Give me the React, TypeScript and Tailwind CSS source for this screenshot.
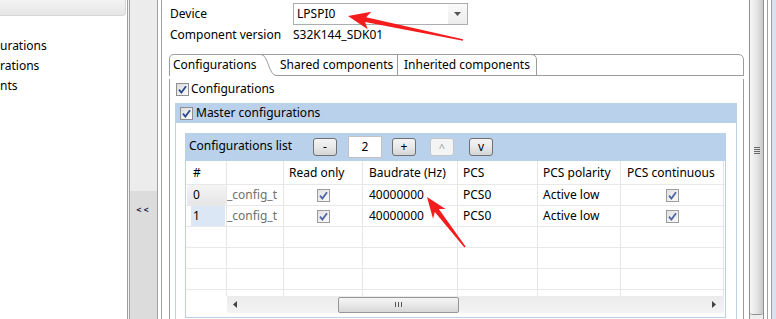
import React from "react";

const Check = ({ table = false }: { table?: boolean }) => (
  <span
    className={
      table
        ? "inline-flex h-[13px] w-[13px] items-center justify-center border border-[#9c9c9c] bg-gradient-to-br from-[#e2e2e2] to-[#fafafa]"
        : "inline-flex h-[13px] w-[13px] items-center justify-center border border-[#8e8f8f] bg-gradient-to-br from-[#dcdcdc] to-[#fbfbfb]"
    }
  >
    <svg width="11" height="11" viewBox="0 0 11 11">
      <path d="M2 5.6 L4.4 8.6 L9 2.2" fill="none" stroke={table ? "#5066a4" : "#2b4a8c"} strokeWidth="1.8" />
    </svg>
  </span>
);

const Btn = ({ label, disabled = false }: { label: string; disabled?: boolean }) => (
  <div
    className={
      disabled
        ? "flex h-[18px] w-[24px] shrink-0 items-center justify-center rounded-[3px] border border-[#c3c6c9] bg-[#f4f4f4] text-[11px] leading-none text-[#a0a0a0]"
        : "flex h-[18px] w-[24px] shrink-0 items-center justify-center rounded-[3px] border border-[#707070] bg-gradient-to-b from-[#f4f4f4] via-[#e9e9e9] to-[#d4d4d4] text-[12px] leading-none text-black"
    }
  >
    {label}
  </div>
);

const cell = "flex items-center border-r border-[#e6e6e6] overflow-hidden whitespace-nowrap";

const DataRow = ({ idx }: { idx: number }) => (
  <div className="grid h-[21px] grid-cols-[41px_57px_79px_95px_80px_83px_103px] border-b border-[#e8e8e8]">
    <div className="flex border-r border-[#e6e6e6]">
      {idx === 0 && (
        <div className="ml-[1px] flex w-[39px] items-center rounded-[2px] bg-gradient-to-b from-[#f4f4f4] to-[#e6e6e6] pl-[6px]">0</div>
      )}
      {idx === 1 && <div className="ml-[5px] flex w-[34px] items-center bg-[#dce7f5] pl-[2px]">1</div>}
    </div>
    <div className={cell + " text-[#707070]"}>{idx < 2 ? "_config_t" : ""}</div>
    <div className={cell + " justify-center"}>{idx < 2 && <Check table />}</div>
    <div className={cell + " pl-[6px]"}>{idx < 2 ? "40000000" : ""}</div>
    <div className={cell + " pl-[5px]"}>{idx < 2 ? "PCS0" : ""}</div>
    <div className={cell + " pl-[5px]"}>{idx < 2 ? "Active low" : ""}</div>
    <div className={cell + " justify-center"}>{idx < 2 && <Check table />}</div>
  </div>
);

export default function App() {
  return (
    <div className="relative flex h-[319px] w-[776px] overflow-hidden bg-white font-['Noto_Sans',sans-serif] text-[12px] leading-none text-black">
      {/* left tree panel */}
      <div className="w-[127px] shrink-0">
        <div className="h-[16px] w-[126px] rounded-br-[4px] border-b border-r border-[#d6d6d6] bg-gradient-to-b from-[#f3f3f3] to-[#e6e6e6]" />
        <div className="mt-[20px] flex flex-col">
          <div className="flex h-[20px] shrink-0 items-center">urations</div>
          <div className="flex h-[20px] shrink-0 items-center">rations</div>
          <div className="flex h-[20px] shrink-0 items-center">nts</div>
        </div>
      </div>
      <div className="w-[3px] shrink-0 border-l border-r border-[#a0a0a0] bg-[#f4f4f4]" />
      <div className="flex w-[27px] shrink-0 flex-col">
        <div className="h-[191px] shrink-0 bg-[#ececec]" />
        <div className="flex flex-1 flex-col items-center bg-[#dcdcdc]">
          <div className="mt-[14px] text-[9px] font-bold tracking-[2px] text-[#1a1a40]">&lt;&lt;</div>
        </div>
      </div>
      <div className="w-[1px] shrink-0 bg-[#a0a0a0]" />
      <div className="w-[3px] shrink-0" />

      {/* main area */}
      <div className="flex w-[588px] shrink-0 flex-col border-l border-[#a0a0a0] pt-[3px]">
        <div className="flex h-[22px] shrink-0 items-center pl-[8px]">
          <div className="w-[123px]">Device</div>
          <div className="flex h-[22px] w-[175px] items-center justify-between border border-[#abadb3] bg-white pl-[3px]">
            <span>LPSPI0</span>
            <div className="flex h-full w-[19px] items-center justify-center bg-gradient-to-b from-[#fafafa] to-[#ececec]">
              <svg width="7" height="4" viewBox="0 0 7 4">
                <path d="M0 0 H7 L3.5 4 Z" fill="#555" />
              </svg>
            </div>
          </div>
        </div>
        <div className="flex h-[20px] shrink-0 items-center pl-[8px]">
          <div className="w-[123px]">Component version</div>
          <div>S32K144_SDK01</div>
        </div>

        {/* tab folder */}
        <div className="ml-[7px] mt-[9px] w-[575px] shrink-0">
          <div className="relative flex h-[22px] items-center">
            <svg className="absolute left-0 top-0" width="575" height="22" viewBox="0 0 575 22">
              <path d="M0.5 22 V5 Q0.5 0.5 5 0.5 H569 Q574.5 0.5 574.5 6 V22" fill="none" stroke="#9c9c9c" />
              <path d="M92 0.5 C99 0.5 100 21.5 107 21.5 H574" fill="none" stroke="#9c9c9c" />
              <path d="M228.5 0.5 V21.5" fill="none" stroke="#9c9c9c" />
              <path d="M362 0.5 Q367.5 0.5 367.5 6 V21.5" fill="none" stroke="#9c9c9c" />
            </svg>
            <div className="relative w-[107px] pl-[4px]">Configurations</div>
            <div className="relative w-[122px] pl-[4px]">Shared components</div>
            <div className="relative pl-[6px]">Inherited components</div>
          </div>
          <div className="h-[300px] border-l border-r border-[#9c9c9c]">
            <div className="mt-[3px] flex h-[20px] items-center gap-[2px] pl-[6px]">
              <Check />
              <span>Configurations</span>
            </div>
            <div className="ml-[5px] mr-[6px] mt-[4px]">
              <div className="flex h-[20px] items-center gap-[3px] bg-[#b9d1ea] pl-[5px]">
                <Check />
                <span>Master configurations</span>
              </div>
              <div className="h-[260px] border-l border-r border-[#b9d1ea] pl-[9px] pr-[10px] pt-[10px]">
                {/* configurations list group */}
                <div className="border-b border-l border-r border-[#b9d1ea]">
                  <div className="flex h-[28px] items-center bg-[#b9d1ea] pl-[3px]">
                    <div className="w-[124px] pb-[2px]">Configurations list</div>
                    <Btn label="-" />
                    <div className="ml-[11px] flex h-[22px] w-[34px] items-center justify-center border border-[#c2c2c2] bg-white">2</div>
                    <div className="ml-[10px]">
                      <Btn label="+" />
                    </div>
                    <div className="ml-[14px]">
                      <Btn label="^" disabled />
                    </div>
                    <div className="ml-[15px]">
                      <Btn label="v" />
                    </div>
                  </div>
                  {/* table header */}
                  <div className="grid h-[24px] grid-cols-[41px_57px_79px_95px_80px_83px_103px] border-b border-[#e8e8e8]">
                    <div className={cell + " pl-[7px]"}>#</div>
                    <div className={cell} />
                    <div className={cell + " pl-[5px]"}>Read only</div>
                    <div className={cell + " pl-[6px]"}>Baudrate (Hz)</div>
                    <div className={cell + " pl-[5px]"}>PCS</div>
                    <div className={cell + " pl-[5px]"}>PCS polarity</div>
                    <div className={cell + " pl-[6px]"}>PCS continuous</div>
                  </div>
                  <div className="h-[111px] overflow-hidden">
                    {[0, 1, 2, 3, 4, 5].map((i) => (
                      <DataRow key={i} idx={i} />
                    ))}
                  </div>
                  {/* horizontal scrollbar */}
                  <div className="flex h-[17px]">
                    <div className="w-[41px] shrink-0" />
                    <div className="relative flex w-[497px] items-center bg-gradient-to-b from-[#ebebeb] to-[#f4f4f4]">
                      <svg className="ml-[6px]" width="4" height="7" viewBox="0 0 4 7">
                        <path d="M4 0 V7 L0 3.5 Z" fill="#444" />
                      </svg>
                      <div className="ml-[101px] flex h-[16px] w-[121px] items-center justify-center gap-[2px] rounded-[2px] border border-[#969696] bg-gradient-to-b from-[#f5f5f5] via-[#e8e8e8] to-[#d7d7d7]">
                        <div className="h-[5px] w-[1px] bg-[#555]" />
                        <div className="h-[5px] w-[1px] bg-[#555]" />
                        <div className="h-[5px] w-[1px] bg-[#555]" />
                      </div>
                      <svg className="ml-auto mr-[8px]" width="4" height="7" viewBox="0 0 4 7">
                        <path d="M0 0 V7 L4 3.5 Z" fill="#444" />
                      </svg>
                    </div>
                  </div>
                  <div className="h-[4px]" />
                </div>
              </div>
            </div>
          </div>
        </div>
      </div>

      {/* vertical scrollbar */}
      <div className="w-[15px] shrink-0 border-l border-r border-[#8f8f8f] bg-[#eeeeee]">
        <div className="flex h-[315px] flex-col items-center rounded-b-[3px] border-b border-[#8f8f8f] bg-gradient-to-r from-[#f6f6f6] via-[#e6e6e6] to-[#c9c9c9]">
          <div className="mt-[147px] flex flex-col gap-[1px]">
            <div className="h-[1px] w-[6px] bg-[#666]" />
            <div className="h-[1px] w-[6px] bg-[#666]" />
            <div className="h-[1px] w-[6px] bg-[#666]" />
            <div className="h-[1px] w-[6px] bg-[#666]" />
          </div>
        </div>
      </div>
      <div className="w-[3px] shrink-0 bg-white" />
      <div className="w-[1px] shrink-0 bg-[#a0a0a0]" />
      <div className="w-[3px] shrink-0 bg-white" />
      <div className="w-[1px] shrink-0 bg-[#a0a0a0]" />
      <div className="w-[4px] shrink-0 bg-[#dae2ef]" />

      {/* red annotation arrows */}
      <svg className="pointer-events-none absolute left-0 top-0" width="776" height="319" viewBox="0 0 776 319">
        <polygon
          points="348,16 371.3,11.7 366.1,17.3 463.1,39.3 462.9,40.7 365.1,22.1 367.7,29.3"
          fill="#f41c1c"
        />
        <polygon
          points="427,197 445.6,208.9 438.8,209.1 465.6,246.6 464.4,247.4 434.8,212.1 433,218.7"
          fill="#f41c1c"
        />
      </svg>
    </div>
  );
}
